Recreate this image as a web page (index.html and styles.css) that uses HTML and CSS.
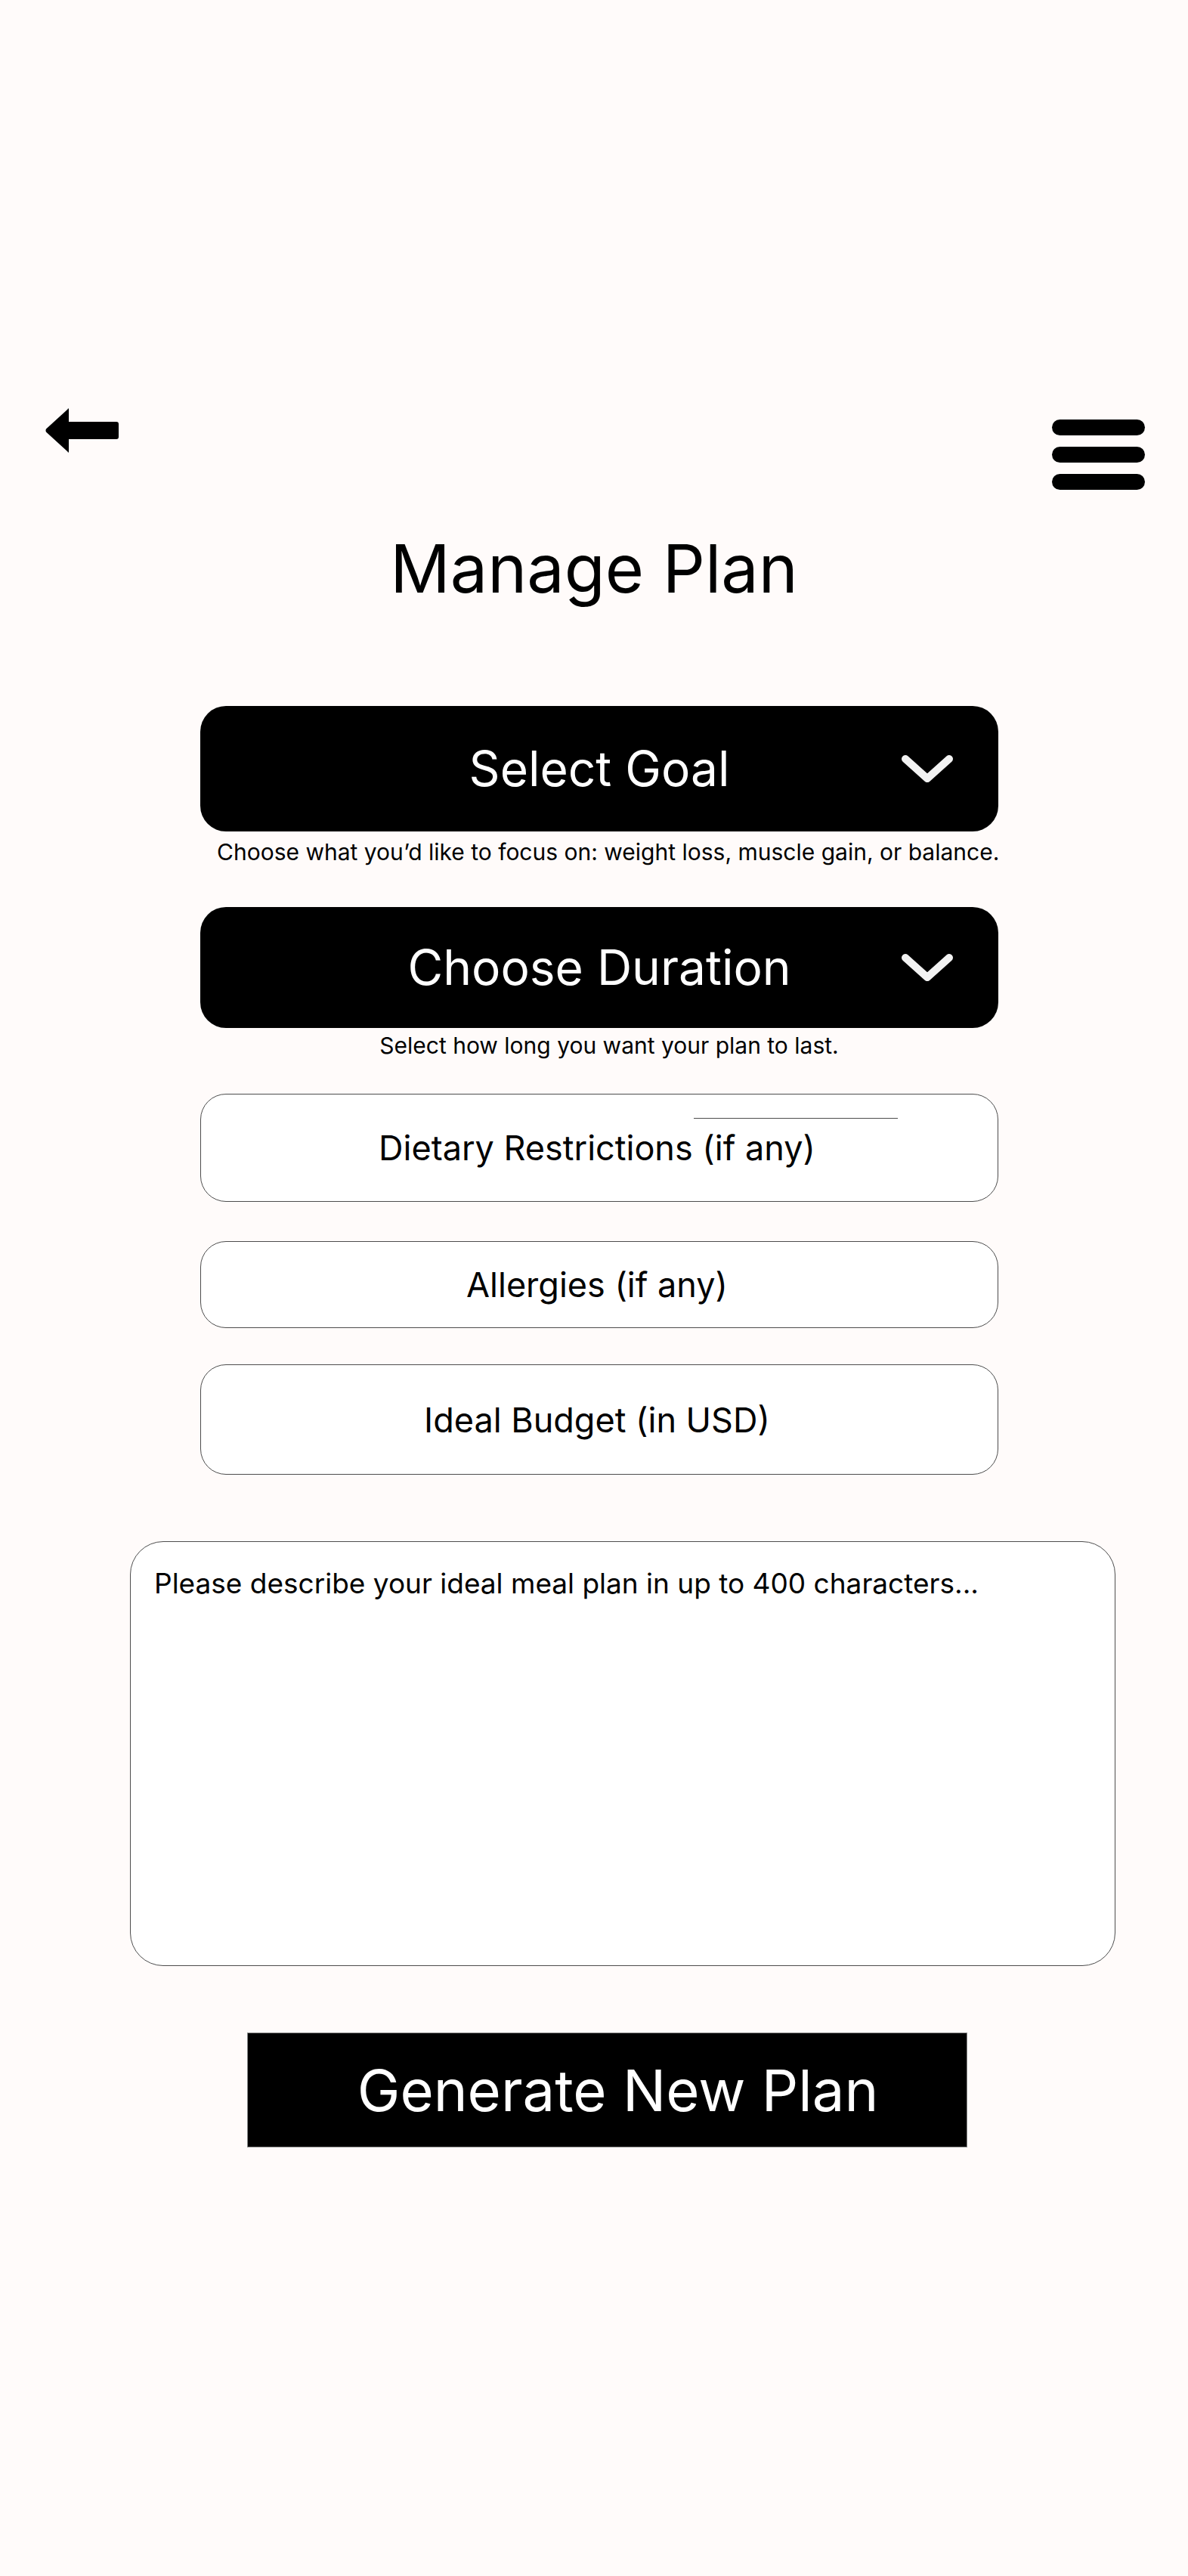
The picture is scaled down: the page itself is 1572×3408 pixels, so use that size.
FILE: index.html
```html
<!DOCTYPE html>
<html lang="en">
<head>
<meta charset="utf-8">
<title>Manage Plan</title>
<link rel="stylesheet" href="styles.css">
</head>
<body>
<div class="page">
  <header class="topbar">
    <button class="back" aria-label="Back">
      <svg width="97" height="59" viewBox="0 0 97 59">
        <path d="M31 1.5 L31 18 L94 18 Q97 18 97 21 L97 38 Q97 41 94 41 L31 41 L31 57.5 Q30.5 60 29.5 57.5 L1 31.5 Q0 29.5 1 27.5 L29.5 1.5 Q30.5 -1 31 1.5 Z" fill="#000"/>
      </svg>
    </button>
    <button class="menu" aria-label="Menu">
      <span class="menu-bar"></span>
      <span class="menu-bar"></span>
      <span class="menu-bar"></span>
    </button>
  </header>

  <h1 class="title">Manage Plan</h1>

  <main class="form">
    <div class="select select-goal">
      <span class="select-label">Select Goal</span>
      <svg class="chevron" width="68" height="36" viewBox="0 0 68 36">
        <polyline points="5,5 34,31 63,5" fill="none" stroke="#f2f2f2" stroke-width="10" stroke-linecap="round" stroke-linejoin="round"/>
      </svg>
    </div>
    <p class="hint hint-goal">Choose what you’d like to focus on: weight loss, muscle gain, or balance.</p>

    <div class="select select-duration">
      <span class="select-label">Choose Duration</span>
      <svg class="chevron" width="68" height="36" viewBox="0 0 68 36">
        <polyline points="5,5 34,31 63,5" fill="none" stroke="#f2f2f2" stroke-width="10" stroke-linecap="round" stroke-linejoin="round"/>
      </svg>
    </div>
    <p class="hint hint-duration">Select how long you want your plan to last.</p>

    <div class="field field-diet">Dietary Restrictions (if any)<span class="field-line"></span></div>
    <div class="field field-allergy">Allergies (if any)</div>
    <div class="field field-budget">Ideal Budget (in USD)</div>
  </main>

  <div class="notes">Please describe your ideal meal plan in up to 400 characters...</div>

  <button class="generate">Generate New Plan</button>
</div>
</body>
</html>
```

FILE: styles.css
```css
* { box-sizing: border-box; }

html, body {
  margin: 0;
  padding: 0;
  background: #fffbfa;
}

body {
  font-family: "Inter", "Noto Sans", "Liberation Sans", sans-serif;
  color: #000;
  min-height: 3408px;
}

.page {
  padding-top: 540px;
}

button {
  font-family: inherit;
  border: none;
  background: none;
  padding: 0;
  margin: 0;
  cursor: pointer;
}

.topbar {
  display: flex;
  justify-content: space-between;
  align-items: flex-start;
  padding: 0 57px 0 60px;
}

.back {
  display: block;
  width: 97px;
  height: 59px;
}
.back svg { display: block; }

.menu {
  display: flex;
  flex-direction: column;
  gap: 15px;
  margin-top: 15px;
}

.menu-bar {
  display: block;
  width: 123px;
  height: 21px;
  border-radius: 11px;
  background: #000;
}

.title {
  margin: 60px 0 0 0;
  text-align: center;
  font-size: 88px;
  font-weight: 400;
  line-height: 1;
}

.form {
  margin: 138px 0 0 265px;
  width: 1056px;
}

.select {
  position: relative;
  display: flex;
  align-items: center;
  justify-content: center;
  background: #000;
  color: #fff;
  border-radius: 34px;
  font-size: 64px;
}

.select-goal { height: 166px; }
.select-duration { height: 160px; margin-top: 55px; }

.select-label { line-height: 1; }

.chevron {
  position: absolute;
  right: 60px;
  top: 50%;
  margin-top: -18px;
}

.hint {
  margin: 0;
  font-size: 30px;
  line-height: 36px;
  text-align: center;
  white-space: nowrap;
}

.hint-goal { margin-top: 9px; padding-left: 22px; }
.hint-duration { margin-top: 5px; padding-left: 26px; }

.field {
  position: relative;
  display: flex;
  align-items: center;
  justify-content: center;
  background: #fff;
  border: 1px solid #4d4d4d;
  border-radius: 34px;
  font-size: 45px;
  line-height: 1;
  padding-right: 6px;
}

.field-diet { height: 143px; margin-top: 46px; }
.field-allergy { height: 115px; margin-top: 52px; }
.field-budget { height: 146px; margin-top: 48px; }

.field-line {
  position: absolute;
  left: 652px;
  top: 31px;
  width: 270px;
  height: 1px;
  background: #4d4d4d;
}

.notes {
  margin: 88px 0 0 172px;
  width: 1304px;
  height: 562px;
  background: #fff;
  border: 1px solid #4d4d4d;
  border-radius: 44px;
  padding: 33px 31px;
  font-size: 37px;
  line-height: 44px;
}

.generate {
  display: flex;
  align-items: center;
  justify-content: center;
  margin: 88px 0 0 327px;
  width: 953px;
  height: 152px;
  background: #000;
  border: 1px solid #8a8a8a;
  color: #fff;
  font-size: 76px;
  line-height: 1;
  padding-left: 28px;
}
```
